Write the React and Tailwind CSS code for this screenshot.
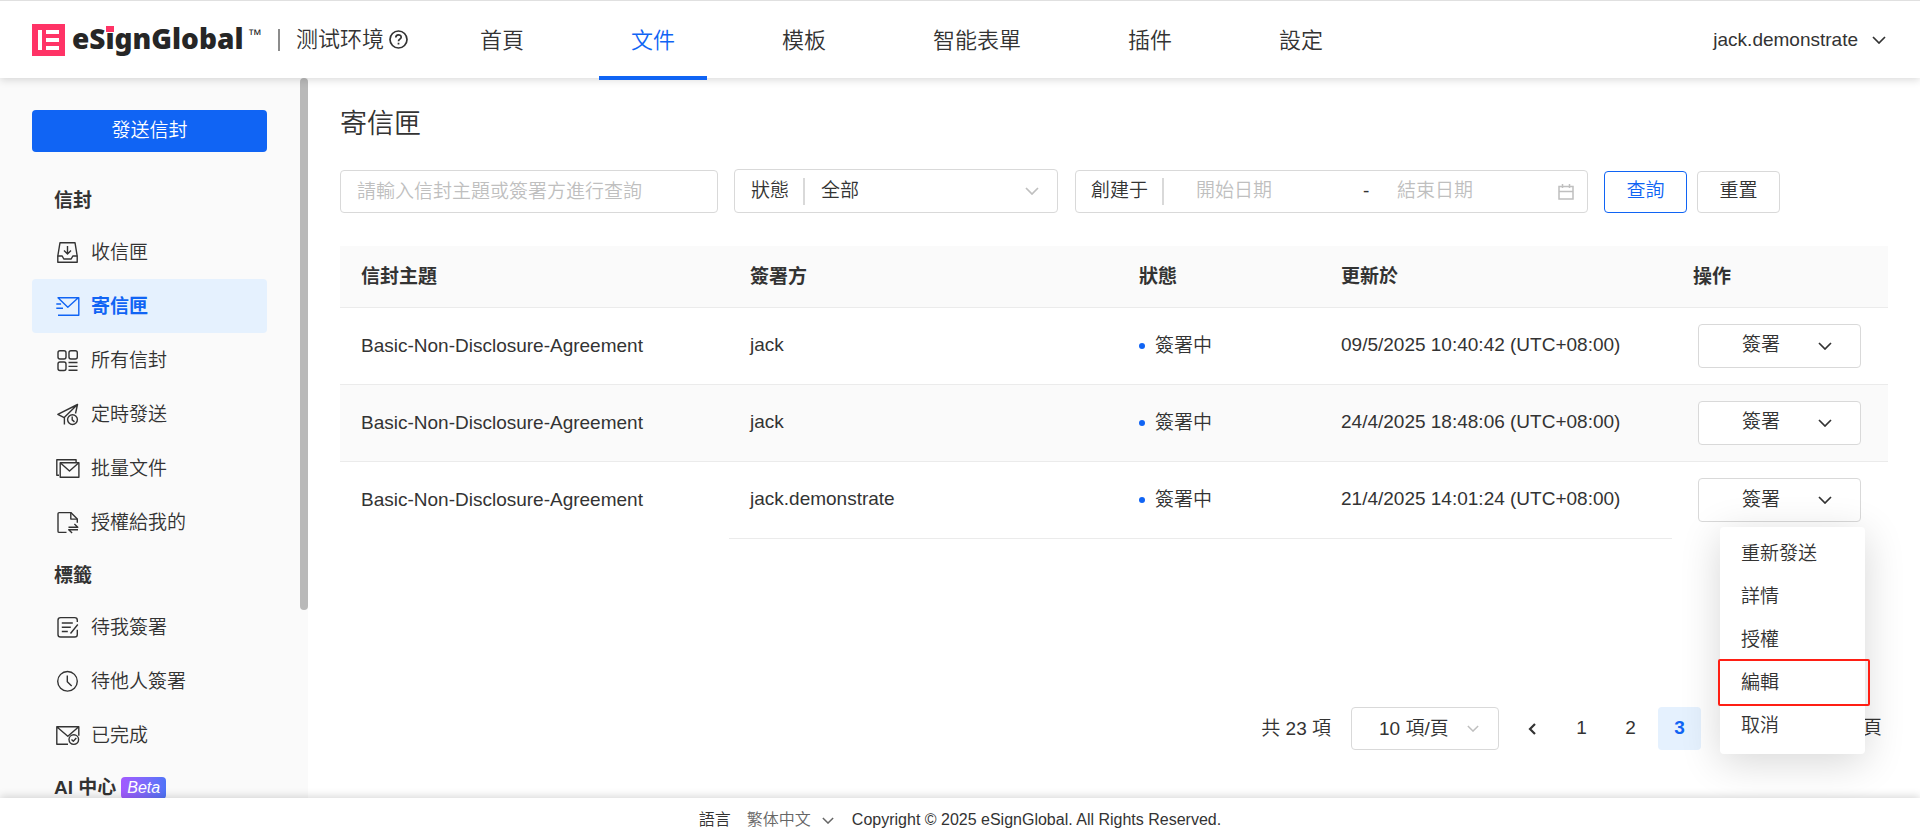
import React, { useState } from 'react';

const navItems = ['首頁', '文件', '模板', '智能表單', '插件', '設定'];

const menuItems = ['重新發送', '詳情', '授權', '編輯', '取消'];

const rows = [
    { subject: 'Basic-Non-Disclosure-Agreement', signer: 'jack', status: '簽署中', updated: '09/5/2025 10:40:42 (UTC+08:00)' },
    { subject: 'Basic-Non-Disclosure-Agreement', signer: 'jack', status: '簽署中', updated: '24/4/2025 18:48:06 (UTC+08:00)' },
    { subject: 'Basic-Non-Disclosure-Agreement', signer: 'jack.demonstrate', status: '簽署中', updated: '21/4/2025 14:01:24 (UTC+08:00)' },
];

const Icon = ({ children }) => (
    <svg
        className="size-6 shrink-0"
        viewBox="0 0 24 24"
        fill="none"
        stroke="currentColor"
        strokeWidth="1.4"
        strokeLinejoin="round"
        aria-hidden="true"
    >
        {children}
    </svg>
);

const Chevron = ({ className }) => (
    <svg className={className} viewBox="0 0 14 8" fill="none" stroke="currentColor" strokeWidth="1.7" aria-hidden="true">
        <path d="M1 1l6 6 6-6" />
    </svg>
);

const InboxIcon = () => (
    <Icon>
        <path d="M4 2.7h15l2.2 13.3v6.3H1.8V16z" />
        <path d="M1.8 16h4.4l1.6 3h7.4l1.6-3h4.4M11.5 6v8M8 10.6l3.5 3.5 3.5-3.5" />
    </Icon>
);

const SentIcon = () => (
    <Icon>
        <path d="M1.5 3.7h21.3v17.6H2M2 3.7l9.8 9.5 10.5-9.5M.3 10h4.8M.3 14.2H7" />
    </Icon>
);

const AllIcon = () => (
    <Icon>
        <rect x="2" y="2.7" width="8" height="8.3" rx="2" />
        <rect x="13" y="2.7" width="8.3" height="8.3" rx="2" />
        <rect x="2" y="14" width="8" height="8.5" rx="2" />
        <path d="M12.5 14.5h9M12.5 18.4h9M12.5 22.3h9" />
    </Icon>
);

const ScheduledIcon = () => (
    <Icon>
        <path d="M19.5 11.5l2-9L1.8 12.3l6.4 3.3L21.5 2.5M8.4 15.5v7" />
        <circle cx="16.5" cy="17.6" r="4.9" />
        <path d="M16.2 14.5v3.4l2.3 2" />
    </Icon>
);

const BatchIcon = () => (
    <Icon>
        <path d="M3 19.3H.8V3.8h19.3v3" />
        <rect x="4.2" y="6.8" width="18.7" height="14.5" />
        <path d="M4.5 7l9 8 9-8" />
    </Icon>
);

const DelegatedIcon = () => (
    <Icon>
        <path d="M10.5 22.4H3.2q-1.2 0-1.2-1.2V3.8q0-1.2 1.2-1.2h11.6l6.5 6.5v3.6" />
        <path d="M14.8 2.6v6.5h6.5M12.5 17.2h9.3l-3.4-3.2M22 19.8h-9.3l3.4 3.2" />
    </Icon>
);

const ToSignIcon = () => (
    <Icon>
        <path d="M21.3 7V5.2q0-2.6-2.6-2.6H4.6Q2 2.6 2 5.2v14.2Q2 22 4.6 22h14.1q2.6 0 2.6-2.6v-4.6" />
        <path d="M5.8 8h11M5.8 12.3h9M5.8 16.5h6M14.5 18.5l7.3-9" />
    </Icon>
);

const ClockIcon = () => (
    <Icon>
        <circle cx="11.5" cy="12.3" r="9.8" />
        <path d="M11.3 6.5v6.2l4.4 4.4" />
    </Icon>
);

const DoneIcon = () => (
    <Icon>
        <path d="M12 21.3H.8V3.8h22v9M1 4l10.8 9.3L22.5 4" />
        <circle cx="17.8" cy="16.6" r="4.8" fill="#fafafa" />
        <path d="M15.5 16.6l1.8 1.7 3-3.2" />
    </Icon>
);

const envelopeLinks = [
    { label: '收信匣', icon: InboxIcon },
    { label: '寄信匣', icon: SentIcon, active: true },
    { label: '所有信封', icon: AllIcon },
    { label: '定時發送', icon: ScheduledIcon },
    { label: '批量文件', icon: BatchIcon },
    { label: '授權給我的', icon: DelegatedIcon },
];

const tagLinks = [
    { label: '待我簽署', icon: ToSignIcon },
    { label: '待他人簽署', icon: ClockIcon },
    { label: '已完成', icon: DoneIcon },
];

const Logo = () => (
    <a href="#" className="flex w-[229px] shrink-0 items-center gap-[7px]">
        <svg className="h-8 w-[33px] shrink-0" viewBox="0 0 33 32" aria-hidden="true">
            <rect width="33" height="32" fill="#ff3366" />
            <path d="M6 6h4v20H6zM14 6h13v4H14zM14 14h13v4H14zM14 22h13v4H14z" fill="#fff" />
        </svg>
        <span className="flex items-start text-[#262626]">
            <span className="-mt-1 font-['Noto_Sans'] text-[28px] leading-8 font-black">
                eS
                <span className="relative">
                    i
                    <span className="absolute top-[7px] left-px h-[6px] w-[8px] bg-[#ff3366]" />
                </span>
                gnGlobal
            </span>
            <span className="ml-1 text-[14px] leading-4">™</span>
        </span>
    </a>
);

const Header = () => (
    <header className="relative z-10 flex h-[78px] shrink-0 items-center border-t border-[#e0e0e0] bg-white pr-[34px] pl-8 shadow-[0_2px_8px_rgba(0,0,0,0.15)]">
        <Logo />
        <div className="ml-[17px] h-[22px] w-[2px] bg-[#8c8c8c]" />
        <span className="ml-4 text-[22px] leading-8">测试环境</span>
        <svg className="ml-[5px] size-[19px]" viewBox="0 0 19 19" fill="none" stroke="currentColor" strokeWidth="1.7" role="img" aria-label="說明">
            <circle cx="9.5" cy="9.5" r="8.5" />
            <path d="M6.8 7.5c0-3.6 5.4-3.4 5.4-.3 0 2-2.7 2-2.7 4.1M9.5 12.7v1.8" />
        </svg>
        <nav className="ml-10 flex gap-[43px] self-stretch">
            {navItems.map((item) => (
                <a
                    key={item}
                    href="#"
                    className={
                        item === '文件'
                            ? '-mb-[2px] flex items-center border-b-4 border-[#1064f4] px-8 pt-[3px] text-[22px] text-[#1064f4]'
                            : 'flex items-center px-8 pt-px text-[22px]'
                    }
                >
                    {item}
                </a>
            ))}
        </nav>
        <button type="button" className="ml-auto flex items-center gap-3.5 text-[19px]">
            <span className="pt-px">jack.demonstrate</span>
            <Chevron className="h-2 w-3.5" />
        </button>
    </header>
);

const SideLink = ({ label, icon: LinkIcon, active }) => (
    <a
        href="#"
        className={
            active
                ? 'flex h-[54px] items-center gap-[11px] rounded-[4px] bg-[#e5f1fe] pl-6 font-bold text-[#1064f4]'
                : 'flex h-[54px] items-center gap-[11px] rounded-[4px] pl-6'
        }
    >
        <LinkIcon />
        <span className="pt-0.5">{label}</span>
    </a>
);

const Sidebar = () => (
    <aside className="relative w-[308px] shrink-0 overflow-hidden bg-[#fafafa] pt-8 pr-[41px] pl-8 text-[19px]">
        <button type="button" className="mb-[22px] h-[42px] w-full rounded-[4px] bg-[#1064f4] text-white">
            發送信封
        </button>
        <h2 className="flex h-[51px] items-center pt-[3px] pl-[22px] font-bold">信封</h2>
        {envelopeLinks.map((link) => (
            <SideLink key={link.label} {...link} />
        ))}
        <h2 className="flex h-[51px] items-center pt-[3px] pl-[22px] font-bold">標籤</h2>
        {tagLinks.map((link) => (
            <SideLink key={link.label} {...link} />
        ))}
        <h2 className="flex h-[51px] items-center gap-[5px] pt-px pl-[22px] font-bold">
            AI 中心
            <span className="rounded-[4px] bg-linear-to-r from-[#a259ff] to-[#4f74f8] px-1.5 text-[16px] leading-[22px] font-medium text-white italic">
                Beta
            </span>
        </h2>
        <div className="absolute top-0 right-0 h-[532px] w-2 rounded-full bg-[#b9b9b9]" />
    </aside>
);

const Filters = () => (
    <form className="mt-6 flex flex-wrap items-end text-[19px]" onSubmit={(e) => e.preventDefault()}>
        <input
            type="text"
            aria-label="信封主題或簽署方"
            placeholder="請輸入信封主題或簽署方進行查詢"
            className="mr-4 h-[43px] w-[378px] rounded-[4px] border border-[#d9d9d9] px-4 placeholder:text-[#bfbfbf]"
        />
        <div className="relative mr-[17px] flex h-11 w-[324px] items-center rounded-[4px] border border-[#d9d9d9] pl-4">
            <label htmlFor="status">狀態</label>
            <div className="ml-3.5 h-[27px] w-[2px] bg-[#d9d9d9]" />
            <select id="status" className="h-full grow appearance-none bg-transparent pr-10 pl-4">
                <option>全部</option>
            </select>
            <Chevron className="pointer-events-none absolute right-[18px] h-2 w-3.5 text-[#bfbfbf]" />
        </div>
        <div className="mr-4 flex h-[43px] w-[513px] items-center rounded-[4px] border border-[#d9d9d9] pr-[13px] pl-[15px]">
            <label htmlFor="start">創建于</label>
            <div className="ml-3.5 h-[27px] w-[2px] bg-[#d9d9d9]" />
            <input
                id="start"
                type="text"
                placeholder="開始日期"
                className="ml-8 w-[150px] placeholder:text-[#bfbfbf]"
            />
            <span className="w-[51px] pl-[17px]">-</span>
            <input
                type="text"
                aria-label="結束日期"
                placeholder="結束日期"
                className="w-[150px] placeholder:text-[#bfbfbf]"
            />
            <svg className="ml-auto size-4" viewBox="0 0 16 16" fill="none" stroke="#bfbfbf" strokeWidth="1.5" aria-hidden="true">
                <path d="M1 2.5h14v12.5H1zM1 7.5h14M4.5 0v4M11.5 0v4" />
            </svg>
        </div>
        <button type="submit" className="mr-2.5 h-[42px] w-[83px] rounded-[4px] border border-[#1064f4] pb-0.5 text-[#1064f4]">
            查詢
        </button>
        <button type="reset" className="h-[42px] w-[83px] rounded-[4px] border border-[#d9d9d9] pb-0.5">
            重置
        </button>
    </form>
);

const ActionMenu = () => (
    <ul className="absolute top-[49px] left-[22px] z-20 w-[145px] rounded-[4px] bg-white pt-[6px] pb-[6px] shadow-[0_8px_40px_rgba(0,0,0,0.16)]">
        {menuItems.map((item) => (
            <li key={item} className="relative">
                <button type="button" className="h-[43px] w-full px-[21px] text-left">
                    {item}
                </button>
                {item === '編輯' && (
                    <span className="pointer-events-none absolute -top-[3px] -right-[5px] -bottom-[1px] -left-[2px] rounded-[2px] border-2 border-[#ff1f14]" />
                )}
            </li>
        ))}
    </ul>
);

const EnvelopeTable = () => {
    const [openRow, setOpenRow] = useState(2);

    return (
        <table className="mt-[33px] w-full table-fixed text-left text-[19px]">
            <thead>
                <tr className="h-[61px] border-b border-[#ebebeb] bg-[#fafafa]">
                    <th className="px-[21px] pt-0.5">信封主題</th>
                    <th className="px-[21px] pt-0.5">簽署方</th>
                    <th className="w-[202px] px-[21px] pt-0.5">狀態</th>
                    <th className="w-[352px] px-[21px] pt-0.5">更新於</th>
                    <th className="w-[216px] px-[21px] pt-0.5">操作</th>
                </tr>
            </thead>
            <tbody>
                {rows.map((row, index) => {
                    const line = index < rows.length - 1 ? 'border-b border-[#ebebeb]' : '';
                    return (
                        <tr key={row.updated} className="h-[77px] even:bg-[#fafafa]">
                            <td className={`px-[21px] pt-px ${line}`}>{row.subject}</td>
                            <td className="border-b border-[#ebebeb] px-[21px]">{row.signer}</td>
                            <td className="border-b border-[#ebebeb] px-[21px]">
                                <span className="flex items-center gap-2.5">
                                    <span className="size-1.5 rounded-full bg-[#1064f4]" />
                                    <span className="pt-0.5">{row.status}</span>
                                </span>
                            </td>
                            <td className="border-b border-[#ebebeb] px-[21px]">{row.updated}</td>
                            <td className={`pl-[26px] ${line}`}>
                                <div className="relative w-[163px]">
                                    <button
                                        type="button"
                                        className="flex h-11 w-full items-center justify-between rounded-[4px] border border-[#d9d9d9] bg-white pr-7 pl-[43px]"
                                        onClick={() => setOpenRow(openRow === index ? null : index)}
                                    >
                                        簽署
                                        <Chevron className="h-2 w-3.5" />
                                    </button>
                                    {openRow === index && <ActionMenu />}
                                </div>
                            </td>
                        </tr>
                    );
                })}
            </tbody>
        </table>
    );
};

const Pagination = () => (
    <div className="mt-auto mb-12 flex items-center justify-end pr-[6px] text-[19px]">
        <span className="mr-5 pt-px">共 23 項</span>
        <div className="relative mr-3 flex h-[43px] w-[148px] items-center rounded-[4px] border border-[#d9d9d9]">
            <select aria-label="每頁項數" className="h-full w-full appearance-none bg-transparent pt-0.5 pl-[27px]">
                <option>10 項/頁</option>
            </select>
            <Chevron className="pointer-events-none absolute right-[19px] h-[7px] w-3 text-[#bfbfbf]" />
        </div>
        <div className="flex gap-1.5">
            <button type="button" aria-label="上一頁" className="flex size-[43px] items-center justify-center">
                <svg className="h-3 w-2" viewBox="0 0 8 12" fill="none" stroke="currentColor" strokeWidth="2.2" aria-hidden="true">
                    <path d="M7 1L2 6l5 5" />
                </svg>
            </button>
            <button type="button" className="size-[43px]">1</button>
            <button type="button" className="size-[43px]">2</button>
            <button type="button" className="size-[43px] rounded-[4px] bg-[#e5f1fe] font-bold text-[#1064f4]">3</button>
        </div>
        <label className="ml-[111px] flex items-center gap-2">
            <input type="text" className="h-[43px] w-[43px] rounded-[4px] border border-[#d9d9d9] text-center" />
            頁
        </label>
    </div>
);

const Footer = () => (
    <footer className="relative z-10 flex h-[42px] shrink-0 items-center justify-center bg-white pt-0.5 text-[16px] shadow-[0_-2px_8px_rgba(0,0,0,0.15)]">
        <label htmlFor="language">語言</label>
        <div className="relative mr-[18px] ml-4 flex items-center text-[#666]">
            <select id="language" className="appearance-none bg-transparent pr-[22px]">
                <option>繁体中文</option>
            </select>
            <Chevron className="pointer-events-none absolute right-0 h-[7px] w-3" />
        </div>
        <span>Copyright © 2025 eSignGlobal. All Rights Reserved.</span>
    </footer>
);

const App = () => {
    return (
        <div className="flex h-screen flex-col bg-white font-['Liberation_Sans','Noto_Sans_CJK_SC',sans-serif] font-[350] text-[#333]">
            <Header />
            <div className="flex min-h-0 grow">
                <Sidebar />
                <main className="flex min-w-0 grow flex-col px-8 pt-[26px]">
                    <h1 className="text-[27px] leading-10">寄信匣</h1>
                    <div className="pt-px">
                        <Filters />
                        <EnvelopeTable />
                    </div>
                    <Pagination />
                </main>
            </div>
            <Footer />
        </div>
    );
};

export default App;
